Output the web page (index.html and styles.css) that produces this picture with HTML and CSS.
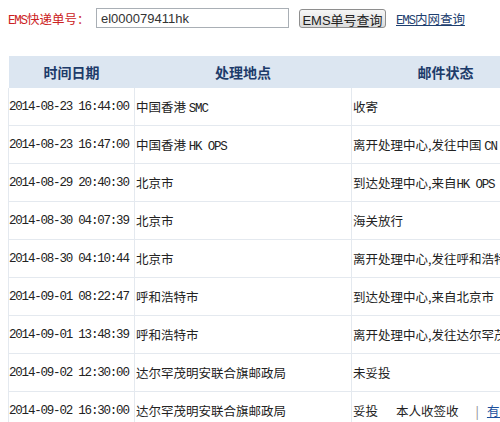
FILE: index.html
```html
<!DOCTYPE html>
<html lang="zh-CN">
<head>
<meta charset="utf-8">
<title>EMS快递查询</title>
<link rel="stylesheet" href="styles.css">
</head>
<body>
<div class="search-bar">
  <label class="label"><span class="lat">EMS</span>快递单号：</label>
  <input class="num-input" type="text" value="el000079411hk">
  <button class="btn" type="button">EMS单号查询</button>
  <a class="link" href="#"><span class="lat">EMS</span>内网查询</a>
</div>
<table class="track">
  <colgroup><col class="c1"><col class="c2"><col class="c3"></colgroup>
  <thead>
    <tr><th>时间日期</th><th>处理地点</th><th>邮件状态</th></tr>
  </thead>
  <tbody>
    <tr><td class="date">2014-08-23 16:44:00</td><td>中国香港 <span class="lat">SMC</span></td><td>收寄</td></tr>
    <tr><td class="date">2014-08-23 16:47:00</td><td>中国香港 <span class="lat">HK OPS</span></td><td>离开处理中心,发往中国 <span class="lat">CN</span></td></tr>
    <tr><td class="date">2014-08-29 20:40:30</td><td>北京市</td><td>到达处理中心,来自<span class="lat">HK OPS</span></td></tr>
    <tr><td class="date">2014-08-30 04:07:39</td><td>北京市</td><td>海关放行</td></tr>
    <tr><td class="date">2014-08-30 04:10:44</td><td>北京市</td><td>离开处理中心,发往呼和浩特市</td></tr>
    <tr><td class="date">2014-09-01 08:22:47</td><td>呼和浩特市</td><td>到达处理中心,来自北京市</td></tr>
    <tr><td class="date">2014-09-01 13:48:39</td><td>呼和浩特市</td><td>离开处理中心,发往达尔罕茂明安联合旗</td></tr>
    <tr><td class="date">2014-09-02 12:30:00</td><td>达尔罕茂明安联合旗邮政局</td><td>未妥投</td></tr>
    <tr><td class="date">2014-09-02 16:30:00</td><td>达尔罕茂明安联合旗邮政局</td><td><span class="st">妥投</span><span class="st2">本人收签收</span><span class="sep">|</span><a class="sign" href="#">有疑问请点击</a></td></tr>
  </tbody>
</table>
</body>
</html>
```
FILE: styles.css
```css
html, body {
  overflow: hidden;
}
body {
  margin: 0;
  padding: 8px;
  font-family: "Noto Sans CJK SC", sans-serif;
  font-size: 12.5px;
  color: #222;
  background: #fff;
}
.lat {
  font-family: "Liberation Mono", monospace;
  font-size: 12.5px;
  letter-spacing: -1.2px;
}
.search-bar {
  display: flex;
  align-items: center;
  height: 20px;
  white-space: nowrap;
}
.label {
  color: #cc2222;
  width: 82px;
  flex: none;
}
.num-input {
  margin: 0 0 0 6px;
  box-sizing: border-box;
  width: 193px;
  height: 20px;
  padding: 0 4px;
  border: 1px solid #a9afb5;
  font-family: "Liberation Sans", sans-serif;
  font-size: 13px;
  color: #333;
  outline: none;
}
.btn {
  margin-left: 10px;
  box-sizing: border-box;
  width: 87px;
  height: 19px;
  padding: 0;
  border: 1px solid #8e8e8e;
  border-radius: 3px;
  background: linear-gradient(#f6f6f6, #dcdcdc);
  font-family: "Liberation Sans", "Noto Sans CJK SC", sans-serif;
  font-size: 13px;
  color: #222;
}
.link {
  margin-left: 10px;
  color: #1e3f70;
  text-decoration: underline;
}
.track {
  margin-top: 28px;
  border-collapse: collapse;
  table-layout: fixed;
  width: 531px;
  white-space: nowrap;
}
.c1 { width: 126px; }
.c2 { width: 217px; }
.c3 { width: 188px; }
.track th {
  height: 32px;
  padding: 0;
  background: #dce6f1;
  color: #1d3b6a;
  font-size: 14px;
  font-weight: bold;
  text-align: center;
}
.track td {
  height: 37px;
  padding: 0 0 0 1px;
  border: 1px solid #e4e9ef;
  border-top: none;
  overflow: hidden;
}
.track td.date {
  padding-left: 0;
  font-family: "Liberation Mono", monospace;
  font-size: 12.5px;
  letter-spacing: -1.2px;
}
.st2 {
  margin-left: 18px;
}
.sep {
  margin-left: 17px;
  color: #888;
}
.sign {
  margin-left: 8px;
  color: #1c4f9c;
  text-decoration: underline;
}
```
